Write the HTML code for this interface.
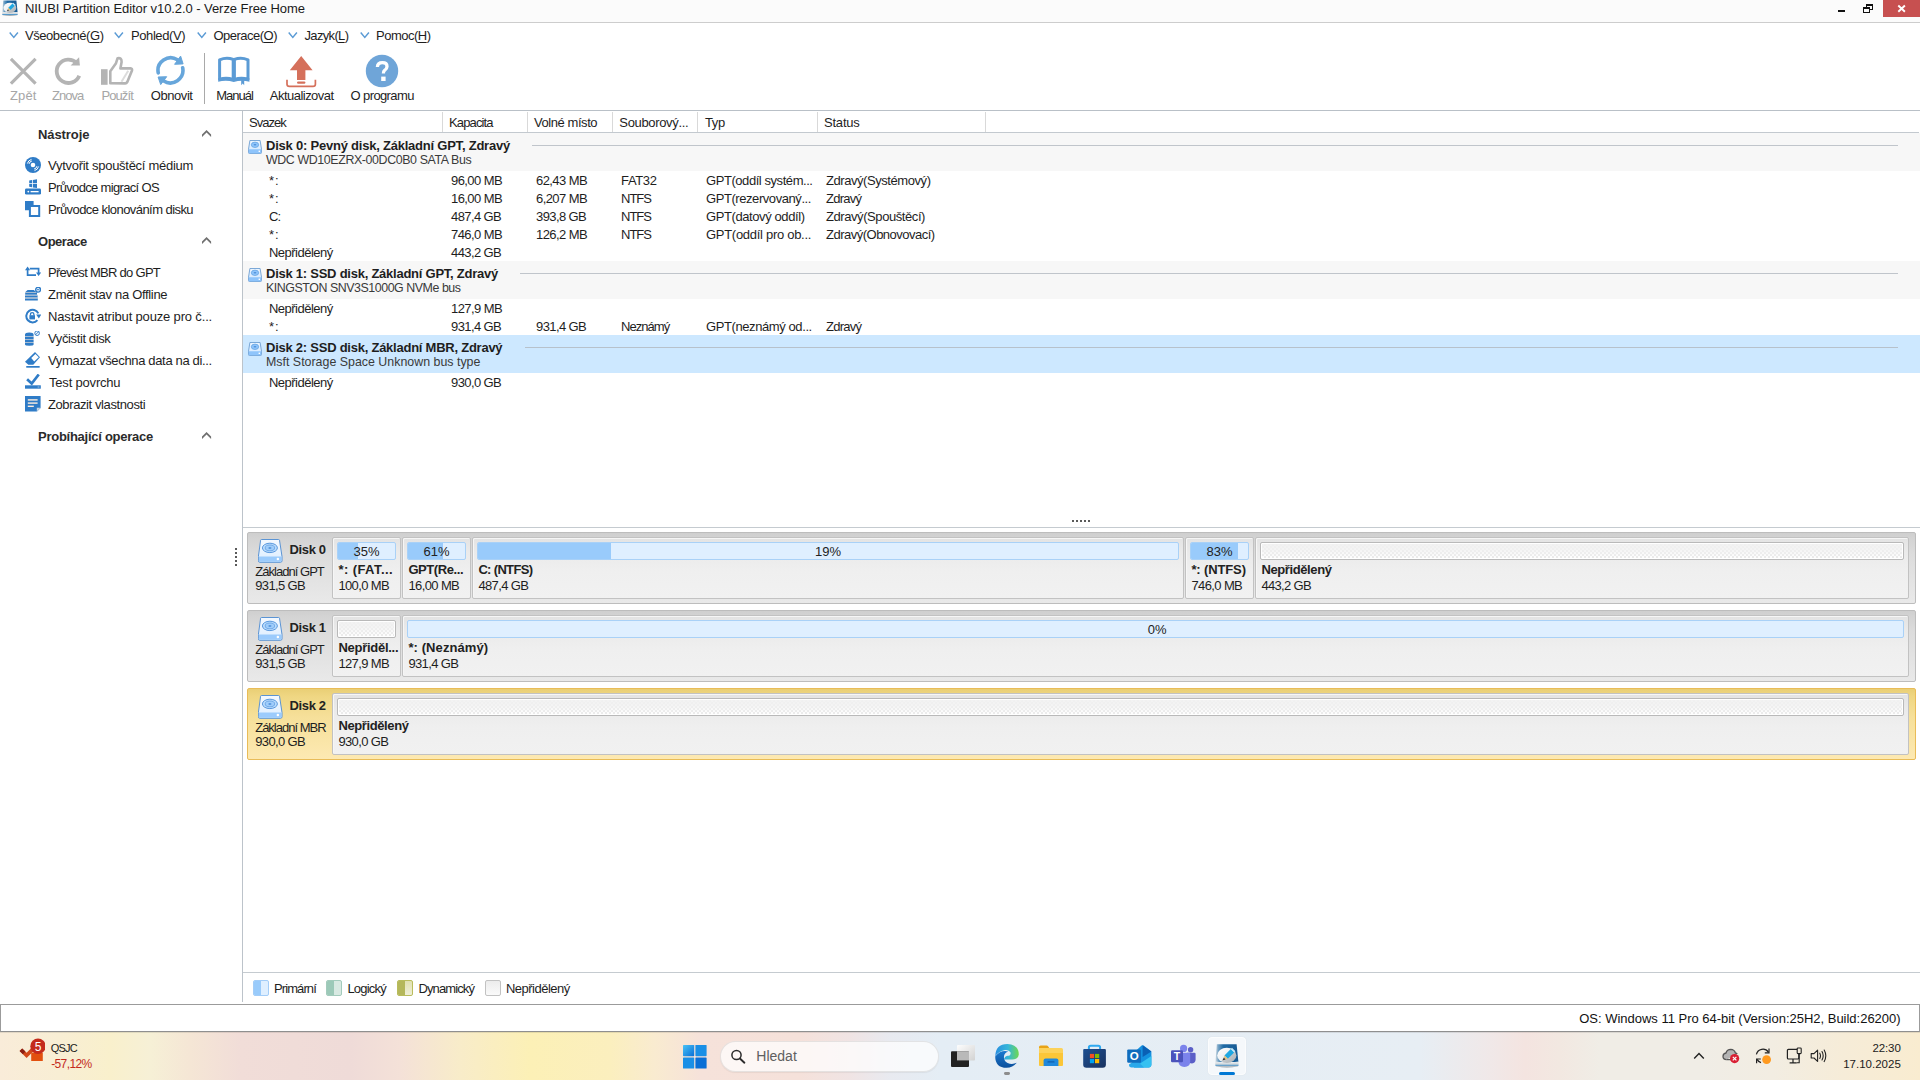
<!DOCTYPE html>
<html lang="cs">
<head>
<meta charset="utf-8">
<title>NIUBI Partition Editor v10.2.0 - Verze Free Home</title>
<style>
*{box-sizing:border-box;margin:0;padding:0}
html,body{width:1920px;height:1080px;overflow:hidden;background:#fff}
body{position:relative;font-family:"Liberation Sans","DejaVu Sans",sans-serif;font-size:13px;color:#1e1e1e}
.a{position:absolute;display:block}
.t{position:absolute;white-space:nowrap;line-height:16px;color:#1e1e1e}
.t u{text-decoration-thickness:1px;text-underline-offset:2px}

.dp{border:1px solid #bdbdbd;border-radius:2px;background:linear-gradient(#cfcfcf 0,#d3d3d3 7%,#dcdcdc 30%,#e9e9e9 100%)}
.dp.sel{border-color:#e9bc58;background:linear-gradient(#e9cf76 0,#efd682 10%,#f6e09a 40%,#fde9b2 100%)}
.pb{border:1px solid #c2c2c2;border-radius:2px;background:linear-gradient(#e3e3e3 0,#eaeaea 22%,#efefef 55%,#f1f1f1 100%);box-shadow:inset 1px 1px 0 #f6f6f6}
.bar{border:1px solid #a9d1f7;border-radius:2px;background:#dfefff;overflow:hidden}
.bar i{position:absolute;left:0;top:0;bottom:0;background:#99cbfb;display:block}
.ubar{border:1px solid #b9b9b9;border-radius:2px;background:linear-gradient(rgba(241,241,241,.95),rgba(241,241,241,.8) 40%,rgba(255,255,255,.1)),repeating-conic-gradient(#e8e8e8 0% 25%,#fff 0% 50%) 1px 1px/4px 4px;box-shadow:inset 0 0 0 1px #fff}

.lg{border:1px solid;border-radius:2px;overflow:hidden}
.lg i{position:absolute;left:0;top:0;bottom:0;width:7px;display:block}
#taskbar{left:0;top:1032px;width:1920px;height:48px;background:linear-gradient(90deg,#f9ecd9 0px,#f8eed4 60px,#f9f0cc 110px,#f6f0d6 150px,#f5e6d5 190px,#f1ddd8 240px,#efdbd8 350px,#f4e1d8 400px,#f8ecc9 460px,#fcf0b6 530px,#fbefbe 610px,#f9ebd0 655px,#f6e2da 700px,#f5e1da 800px,#f0e4e4 850px,#e8eaf0 890px,#e4edf5 940px,#e7eef4 1420px,#f0e8e8 1490px,#f4e4e0 1525px,#f2e8e1 1560px,#f0ede6 1600px,#f0ede6 1700px,#f2ede2 1772px,#f6ecd8 1843px,#f9ecd0 1920px)}
#search{left:719.5px;top:1040.5px;width:219px;height:31px;border-radius:15.5px;background:rgba(255,255,255,.72);border:1px solid rgba(0,0,0,.09);box-shadow:0 1px 1px rgba(0,0,0,.06)}

</style>
</head>
<body>
<div class="a" style="left:0px;top:0px;width:1920px;height:22px;background:#fbfbfb;"></div>
<div class="a" style="left:0px;top:22px;width:1920px;height:1px;background:#cdcdcd;"></div>
<svg class="a" style="left:2px;top:-0.5px;overflow:hidden;" width="16" height="16.5" viewBox="0 0 24 24"><defs><linearGradient id="ni1" x1="0" y1="0" x2="1" y2="0"><stop offset="0" stop-color="#d3dde4"/><stop offset=".14" stop-color="#6b9dc2"/><stop offset=".34" stop-color="#1f6aa5"/><stop offset="1" stop-color="#175a93"/></linearGradient>
<linearGradient id="ni2" x1="0" y1="0" x2="1" y2="1"><stop offset="0" stop-color="#ffffff"/><stop offset=".5" stop-color="#eceff1"/><stop offset=".62" stop-color="#bfc4c8"/><stop offset="1" stop-color="#a9afb4"/></linearGradient>
<linearGradient id="ni3" x1="0" y1="0" x2="0" y2="1"><stop offset="0" stop-color="#e9edf0"/><stop offset=".45" stop-color="#cfd6db"/><stop offset=".6" stop-color="#3c8fcb"/><stop offset=".75" stop-color="#c3cacf"/><stop offset="1" stop-color="#8c959c"/></linearGradient></defs>
<path d="M1.8 .3H21.6L23.4 18H.4z" fill="url(#ni1)"/>
<path d="M.3 17.6Q12 19.6 23.6 17.6V21.2Q23.6 22.2 22.6 22.6Q12 24.6 1.4 22.6Q.3 22.2 .3 21.2z" fill="url(#ni3)"/>
<ellipse cx="11.8" cy="11.4" rx="9.6" ry="7.6" fill="url(#ni2)"/>
<path d="M9.4 11.4L15.8 5L19.2 8.4L12.8 14.8z" fill="#1ea7e1"/><path d="M15.8 5L17 3.8L20.4 7.2L19.2 8.4z" fill="#bfe6fa"/>
<path d="M9.4 11.4L12.8 14.8L10.6 15.4L8.8 13.6z" fill="#e8c37a"/><path d="M8.8 13.6L10.6 15.4L7.4 16.6z" fill="#333"/></svg>
<div class="t" style="top:1px;font-size:13px;color:#1a1a1a;letter-spacing:-0.069px;left:25px;">NIUBI Partition Editor v10.2.0 - Verze Free Home</div>
<div class="a" style="left:1838px;top:10px;width:7px;height:2px;background:#111;"></div>
<svg class="a" style="left:1862px;top:3px;shape-rendering:crispEdges;" width="12" height="11" viewBox="0 0 12 11"><path d="M4 1H11V7H8.2V6H10V3H5V4H4z" fill="#111"/><path d="M1 4H8V10H1zM2 6V9H7V6z" fill="#111" fill-rule="evenodd"/></svg>
<div class="a" style="left:1883px;top:0px;width:37px;height:17px;background:#c75050;"></div>
<svg class="a" style="left:1897px;top:4px;" width="10" height="9" viewBox="0 0 10 9"><path d="M1.3 1.5L7.9 7.7M7.9 1.5L1.3 7.7" stroke="#fff" stroke-width="1.9" fill="none"/></svg>
<svg class="a" style="left:9px;top:31px;" width="11" height="9" viewBox="0 0 11 9"><path d="M.7 1.5L4.8 6.4L8.9 1.5" fill="none" stroke="#5b9bd5" stroke-width="1.45"/></svg>
<div class="t" style="top:28px;font-size:13px;letter-spacing:-0.442px;left:25px;">Všeobecné(<u>G</u>)</div>
<svg class="a" style="left:114px;top:31px;" width="11" height="9" viewBox="0 0 11 9"><path d="M.7 1.5L4.8 6.4L8.9 1.5" fill="none" stroke="#5b9bd5" stroke-width="1.45"/></svg>
<div class="t" style="top:28px;font-size:13px;letter-spacing:-0.416px;left:131px;">Pohled(<u>V</u>)</div>
<svg class="a" style="left:196.5px;top:31px;" width="11" height="9" viewBox="0 0 11 9"><path d="M.7 1.5L4.8 6.4L8.9 1.5" fill="none" stroke="#5b9bd5" stroke-width="1.45"/></svg>
<div class="t" style="top:28px;font-size:13px;letter-spacing:-0.519px;left:213.5px;">Operace(<u>O</u>)</div>
<svg class="a" style="left:288px;top:31px;" width="11" height="9" viewBox="0 0 11 9"><path d="M.7 1.5L4.8 6.4L8.9 1.5" fill="none" stroke="#5b9bd5" stroke-width="1.45"/></svg>
<div class="t" style="top:28px;font-size:13px;letter-spacing:-0.663px;left:304.5px;">Jazyk(<u>L</u>)</div>
<svg class="a" style="left:359.5px;top:31px;" width="11" height="9" viewBox="0 0 11 9"><path d="M.7 1.5L4.8 6.4L8.9 1.5" fill="none" stroke="#5b9bd5" stroke-width="1.45"/></svg>
<div class="t" style="top:28px;font-size:13px;letter-spacing:-0.504px;left:376px;">Pomoc(<u>H</u>)</div>
<svg class="a" style="left:9px;top:57px;" width="29" height="29" viewBox="0 0 29 29"><path d="M1.9 1.9L26.6 26.6M26.6 1.9L1.9 26.6" stroke="#b4b4b4" stroke-width="3.2" fill="none"/></svg>
<div class="t" style="top:88px;font-size:13px;color:#a6a6a6;letter-spacing:0.061px;left:10.1px;">Zpět</div>
<svg class="a" style="left:53px;top:55px;" width="30" height="32" viewBox="0 0 30 32"><path d="M23.7 8A11.7 11.7 0 1 0 26.25 20.7" fill="none" stroke="#b4b4b4" stroke-width="3.8"/><path d="M17.6 10.4L26.1 2.2L26.9 10.4z" fill="#b4b4b4"/></svg>
<div class="t" style="top:88px;font-size:13px;color:#a6a6a6;letter-spacing:-0.985px;left:52.1px;">Znova</div>
<svg class="a" style="left:100px;top:56px;" width="34" height="30" viewBox="0 0 34 30"><rect x="1" y="13.2" width="6.6" height="15.6" fill="#b4b4b4"/>
<path d="M10.3 27.2V15.2L16 7.2L17.6 2.2Q21.8 1.4 21.6 6L20.4 12.4H30.6Q32.4 12.6 32 14.6L27.2 26.2Q26.6 27.4 25.2 27.4Z" fill="#fff" stroke="#b4b4b4" stroke-width="2.6" stroke-linejoin="round"/>
<path d="M21.5 25.8L28.2 14.8" stroke="#dcdcdc" stroke-width="2"/></svg>
<div class="t" style="top:88px;font-size:13px;color:#a6a6a6;letter-spacing:-0.892px;left:101.4px;">Použít</div>
<svg class="a" style="left:154px;top:54px;" width="33" height="33" viewBox="0 0 33 33"><path d="M4.25 18.9A12.65 12.65 0 0 1 23.5 5.85" fill="none" stroke="#67a6db" stroke-width="3.6" stroke-linecap="round"/>
<path d="M28.65 13.7A12.65 12.65 0 0 1 9.4 26.85" fill="none" stroke="#67a6db" stroke-width="3.6" stroke-linecap="round"/>
<path d="M26.6 2.1L29.1 9.9L20.6 10.3z" fill="#67a6db" stroke="#67a6db" stroke-width="1" stroke-linejoin="round"/>
<path d="M6.7 30.6L4.1 23L12.7 22.7z" fill="#67a6db" stroke="#67a6db" stroke-width="1" stroke-linejoin="round"/></svg>
<div class="t" style="top:88px;font-size:13px;letter-spacing:-0.419px;left:150.7px;">Obnovit</div>
<div class="a" style="left:204px;top:53px;width:1px;height:51px;background:#a9a9a9;"></div>
<svg class="a" style="left:217px;top:55px;" width="34" height="31" viewBox="0 0 34 31"><path d="M2.6 24.2V4.8Q9.5 1.8 16.2 4.4V24.4Q9.5 22.4 2.6 24.2Z" fill="#fff" stroke="#5b9bd5" stroke-width="3" stroke-linejoin="round"/>
<path d="M31 24.2V4.8Q24.1 1.8 17.4 4.4V24.4Q24.1 22.4 31 24.2Z" fill="#fff" stroke="#5b9bd5" stroke-width="3" stroke-linejoin="round"/>
<path d="M1.2 23.2V26.8Q9 24.6 16.8 27Q24.6 24.6 32.4 26.8V23.2" fill="#5b9bd5"/>
<path d="M24.2 25V30.2L25.7 28.6L27.2 30.2V25.2z" fill="#5b9bd5"/></svg>
<div class="t" style="top:88px;font-size:13px;letter-spacing:-1.000px;left:216.2px;">Manuál</div>
<svg class="a" style="left:285px;top:55px;" width="33" height="33" viewBox="0 0 33 33"><path d="M16.2 1L27.6 15.2H20.4V25H12V15.2H4.8z" fill="#d5705b"/>
<rect x="12" y="26.4" width="8.4" height="2.4" rx="1.2" fill="#d5705b"/>
<path d="M2 24.8V29.2Q2 31.4 4.4 31.4H28Q30.4 31.4 30.4 29.2V24.8" fill="none" stroke="#d5705b" stroke-width="1.7"/></svg>
<div class="t" style="top:88px;font-size:13px;letter-spacing:-0.527px;left:269.8px;">Aktualizovat</div>
<svg class="a" style="left:365px;top:54px;" width="34" height="34" viewBox="0 0 34 34"><circle cx="17" cy="17" r="16.2" fill="#6fa5d8"/>
<path d="M12.4 13Q12.6 8.6 17.4 8.6Q22 8.6 22 12.4Q22 14.8 19.6 16.4Q18.4 17.2 18.4 19.6" fill="none" stroke="#fff" stroke-width="3.3"/>
<rect x="16.2" y="22.6" width="4.4" height="4.4" fill="#fff"/></svg>
<div class="t" style="top:88px;font-size:13px;letter-spacing:-0.619px;left:350.6px;">O programu</div>
<div class="a" style="left:0px;top:110px;width:1920px;height:1px;background:#b9c0c7;"></div>
<div class="a" style="left:242px;top:111px;width:1px;height:891px;background:#bcc3ca;"></div>
<div class="t" style="top:127px;font-size:13px;font-weight:bold;color:#2b2b2b;letter-spacing:-0.076px;left:38px;">Nástroje</div>
<svg class="a" style="left:201px;top:129px;" width="12" height="9" viewBox="0 0 12 9"><path d="M1 8.1V5.5L5.55 .9L10.1 5.5V8.1L5.55 3.5z" fill="#707070"/></svg>
<div class="t" style="top:234px;font-size:13px;font-weight:bold;color:#2b2b2b;letter-spacing:-0.474px;left:38px;">Operace</div>
<svg class="a" style="left:201px;top:236px;" width="12" height="9" viewBox="0 0 12 9"><path d="M1 8.1V5.5L5.55 .9L10.1 5.5V8.1L5.55 3.5z" fill="#707070"/></svg>
<div class="t" style="top:429px;font-size:13px;font-weight:bold;color:#2b2b2b;letter-spacing:-0.263px;left:38px;">Probíhající operace</div>
<svg class="a" style="left:201px;top:431px;" width="12" height="9" viewBox="0 0 12 9"><path d="M1 8.1V5.5L5.55 .9L10.1 5.5V8.1L5.55 3.5z" fill="#707070"/></svg>
<div class="t" style="top:158px;font-size:13px;letter-spacing:-0.274px;left:48px;">Vytvořit spouštěcí médium</div>
<div class="t" style="top:180px;font-size:13px;letter-spacing:-0.664px;left:48px;">Průvodce migrací OS</div>
<div class="t" style="top:202px;font-size:13px;letter-spacing:-0.558px;left:48px;">Průvodce klonováním disku</div>
<div class="t" style="top:265px;font-size:13px;letter-spacing:-0.717px;left:48px;">Převést MBR do GPT</div>
<div class="t" style="top:287px;font-size:13px;letter-spacing:-0.315px;left:48px;">Změnit stav na Offline</div>
<div class="t" style="top:309px;font-size:13px;letter-spacing:-0.163px;left:48px;">Nastavit atribut pouze pro č...</div>
<div class="t" style="top:331px;font-size:13px;letter-spacing:-0.385px;left:48px;">Vyčistit disk</div>
<div class="t" style="top:353px;font-size:13px;letter-spacing:-0.338px;left:48px;">Vymazat všechna data na di...</div>
<div class="t" style="top:375px;font-size:13px;letter-spacing:-0.191px;left:49px;">Test povrchu</div>
<div class="t" style="top:397px;font-size:13px;letter-spacing:-0.398px;left:48px;">Zobrazit vlastnosti</div>
<svg class="a" style="left:25px;top:157px;" width="16" height="16" viewBox="0 0 16 16"><circle cx="8" cy="8" r="8" fill="#2f7cc7"/><circle cx="8" cy="8" r="2.3" fill="#fff"/>
<path d="M2.4 6.5A5.8 5.8 0 0 1 6.5 2.4M3.94 6.91A4.2 4.2 0 0 1 6.91 3.94" fill="none" stroke="#fff" stroke-width="1"/>
<path d="M13.6 9.5A5.8 5.8 0 0 1 9.5 13.6M12.06 9.09A4.2 4.2 0 0 1 9.09 12.06" fill="none" stroke="#fff" stroke-width="1"/></svg>
<svg class="a" style="left:25px;top:179px;" width="16" height="16" viewBox="0 0 16 16"><path d="M4.2 1.6L7 1.1V4.3H4.2zM7.8 1L12 .2V4.3H7.8zM4.2 5.1H7V8.3L4.2 7.8zM7.8 5.1H12V9.1L7.8 8.4z" fill="#2f7cc7"/>
<rect x="0" y="9.6" width="16" height="6" rx="1.4" fill="#2f7cc7"/><rect x="5.6" y="12" width="8" height="1.3" fill="#fff"/><circle cx="3.3" cy="12.6" r=".9" fill="#fff"/></svg>
<svg class="a" style="left:25px;top:201px;" width="16" height="16" viewBox="0 0 16 16"><path d="M0 0H8.6V4H4V9.2H0z" fill="#2f7cc7"/><rect x="4.9" y="5" width="9.3" height="10" fill="#fff" stroke="#2f7cc7" stroke-width="2"/></svg>
<svg class="a" style="left:25px;top:264px;" width="16" height="16" viewBox="0 0 16 16"><path d="M2.6 5V11.2H11" fill="none" stroke="#2f7cc7" stroke-width="1.7"/><path d="M4.8 4.6H13.6V9" fill="none" stroke="#2f7cc7" stroke-width="1.7"/>
<path d="M0 6.2L2.6 2.6L5.2 6.2z" fill="#2f7cc7"/><path d="M11 8.4L13.6 12L16.2 8.4z" fill="#2f7cc7"/></svg>
<svg class="a" style="left:25px;top:287px;" width="16" height="16" viewBox="0 0 16 16"><path d="M2.6 3H8.8L11.2 5H.4zM.2 5.8H12V7.7H.2zM0 8.6H12.6V10.6H0zM0 11.5H12.8V13.6H0z" fill="#2f7cc7"/>
<path d="M.2 5H12V5.8H.2zM0 7.7H12.6V8.6H0zM0 10.6H12.8V11.5H0z" fill="#9ab0c6"/>
<circle cx="13.1" cy="2.7" r="2.4" fill="#fff" stroke="#2f7cc7" stroke-width="1.4"/><rect x="11.9" y="2.2" width="2.4" height="1.1" fill="#2f7cc7"/></svg>
<svg class="a" style="left:25px;top:308px;" width="16" height="16" viewBox="0 0 16 16"><path d="M13.3 5.4A6.3 6.3 0 1 0 12.4 12.2" fill="none" stroke="#2f7cc7" stroke-width="2"/><path d="M11.2 6.4H16.4L13.8 10.4z" fill="#2f7cc7"/>
<rect x="4.4" y="7.2" width="5.6" height="4.2" fill="#2f7cc7"/><path d="M5.5 7.6V6.2Q5.5 4.6 7.2 4.6Q8.9 4.6 8.9 6.2V7.6" fill="none" stroke="#2f7cc7" stroke-width="1.3"/></svg>
<svg class="a" style="left:25px;top:331px;" width="16" height="16" viewBox="0 0 16 16"><path d="M0 3.6Q0 1.4 4.3 1.4Q8.6 1.4 8.6 3.6V5H0zM0 5.8H8.6V8H0zM0 8.8H8.6V11H0zM0 11.8H8.6V13.6Q8.6 14.8 4.3 14.8Q0 14.8 0 13.6z" fill="#2f7cc7"/>
<path d="M0 5H8.6V5.8H0zM0 8H8.6V8.8H0zM0 11H8.6V11.8H0z" fill="#9ab0c6"/>
<circle cx="12.1" cy="2.2" r="2.3" fill="#fff" stroke="#2f7cc7" stroke-width="1"/><path d="M10.5 3.8L13.7 .6" stroke="#2f7cc7" stroke-width="1"/></svg>
<svg class="a" style="left:25px;top:352px;" width="16" height="16" viewBox="0 0 16 16"><path d="M10 0L15 5.25L8.3 12.75H3.3L0 9.8z" fill="#2f7cc7"/><path d="M10.4 1.9L13.75 5.25L9.2 9.4L6.25 6.1z" fill="#fff"/><rect x="1.25" y="14" width="13.4" height="1.7" fill="#2f7cc7"/></svg>
<svg class="a" style="left:25px;top:374px;" width="16" height="16" viewBox="0 0 16 16"><path d="M2.1 5.3L6.7 9.5L13.75 .5" fill="none" stroke="#2f7cc7" stroke-width="2.7"/><rect x="0" y="11.3" width="15.8" height="3.4" fill="#2f7cc7"/><rect x="12.6" y="12.6" width="1.8" height=".8" fill="#b8d4ee"/></svg>
<svg class="a" style="left:25px;top:396px;" width="16" height="16" viewBox="0 0 16 16"><path d="M0 0H15.6V12L12 15.6H0z" fill="#2f7cc7"/><path d="M11.8 15.6V11.8H15.6z" fill="#c9d6e2"/>
<rect x="2.8" y="3.2" width="9.8" height="1.4" fill="#fdeee0"/><rect x="2.8" y="6.4" width="9.8" height="1.4" fill="#fdeee0"/><rect x="2.8" y="9.6" width="6" height="1.4" fill="#fdeee0"/></svg>
<div class="t" style="top:115px;font-size:13px;letter-spacing:-1.000px;left:249px;">Svazek</div>
<div class="t" style="top:115px;font-size:13px;letter-spacing:-0.856px;left:449px;">Kapacita</div>
<div class="t" style="top:115px;font-size:13px;letter-spacing:-0.434px;left:534px;">Volné místo</div>
<div class="t" style="top:115px;font-size:13px;letter-spacing:-0.336px;left:619.3px;">Souborový...</div>
<div class="t" style="top:115px;font-size:13px;letter-spacing:-0.384px;left:705px;">Typ</div>
<div class="t" style="top:115px;font-size:13px;letter-spacing:-0.212px;left:824px;">Status</div>
<div class="a" style="left:442px;top:112px;width:1px;height:20px;background:#d9d9d9;"></div>
<div class="a" style="left:527px;top:112px;width:1px;height:20px;background:#d9d9d9;"></div>
<div class="a" style="left:612px;top:112px;width:1px;height:20px;background:#d9d9d9;"></div>
<div class="a" style="left:697px;top:112px;width:1px;height:20px;background:#d9d9d9;"></div>
<div class="a" style="left:817px;top:112px;width:1px;height:20px;background:#d9d9d9;"></div>
<div class="a" style="left:985px;top:112px;width:1px;height:20px;background:#d9d9d9;"></div>
<div class="a" style="left:243px;top:132px;width:1676px;height:1px;background:#c3c9cf;"></div>
<div class="a" style="left:243px;top:133px;width:1677px;height:38px;background:#f7f7f7;"></div>
<svg class="a" style="left:248px;top:140px;" width="14" height="14" viewBox="0 0 14 14"><defs><linearGradient id="dsg" x1="0" y1="0" x2="0" y2="1"><stop offset="0" stop-color="#eef6ff"/><stop offset="1" stop-color="#cfe6ff"/></linearGradient></defs><path d="M1.9 .5H12.1L13.5 9.2V12.6Q13.5 13.5 12.6 13.5H1.4Q.5 13.5 .5 12.6V9.2Z" fill="url(#dsg)" stroke="#6e9fd2" stroke-width=".9"/>
<path d="M.8 9.3H13.2V12.5Q13.2 13.2 12.5 13.2H1.5Q.8 13.2 .8 12.5Z" fill="#8ec4fb"/>
<ellipse cx="7" cy="4.8" rx="3.7" ry="2.7" fill="#8ec4fb" stroke="#5f9fe0" stroke-width=".7"/><ellipse cx="7" cy="4.8" rx="1.4" ry=".7" fill="#4f90d8"/>
<rect x="10.6" y="10.6" width="1.4" height="1.4" fill="#fff"/></svg>
<div class="t" style="top:138px;font-size:13px;font-weight:bold;letter-spacing:-0.223px;left:266px;">Disk 0: Pevný disk, Základní GPT, Zdravý</div>
<div class="t" style="top:152px;font-size:12.4px;color:#3a3a3a;letter-spacing:-0.387px;left:266px;">WDC WD10EZRX-00DC0B0 SATA Bus</div>
<div class="a" style="left:532px;top:145px;width:1366px;height:1px;background:#c0c5cb;"></div>
<div class="t" style="top:173px;font-size:13px;letter-spacing:1.000px;left:269px;">*:</div>
<div class="t" style="top:173px;font-size:13px;letter-spacing:-0.579px;left:451px;">96,00 MB</div>
<div class="t" style="top:173px;font-size:13px;letter-spacing:-0.579px;left:536px;">62,43 MB</div>
<div class="t" style="top:173px;font-size:13px;letter-spacing:-0.336px;left:621px;">FAT32</div>
<div class="t" style="top:173px;font-size:13px;letter-spacing:-0.438px;left:706px;">GPT(oddíl systém...</div>
<div class="t" style="top:173px;font-size:13px;letter-spacing:-0.436px;left:826px;">Zdravý(Systémový)</div>
<div class="t" style="top:191px;font-size:13px;letter-spacing:1.000px;left:269px;">*:</div>
<div class="t" style="top:191px;font-size:13px;letter-spacing:-0.579px;left:451px;">16,00 MB</div>
<div class="t" style="top:191px;font-size:13px;letter-spacing:-0.579px;left:536px;">6,207 MB</div>
<div class="t" style="top:191px;font-size:13px;letter-spacing:-1.000px;left:621px;">NTFS</div>
<div class="t" style="top:191px;font-size:13px;letter-spacing:-0.430px;left:706px;">GPT(rezervovaný...</div>
<div class="t" style="top:191px;font-size:13px;letter-spacing:-0.747px;left:826px;">Zdravý</div>
<div class="t" style="top:209px;font-size:13px;letter-spacing:-1.000px;left:269px;">C:</div>
<div class="t" style="top:209px;font-size:13px;letter-spacing:-0.591px;left:451px;">487,4 GB</div>
<div class="t" style="top:209px;font-size:13px;letter-spacing:-0.591px;left:536px;">393,8 GB</div>
<div class="t" style="top:209px;font-size:13px;letter-spacing:-1.000px;left:621px;">NTFS</div>
<div class="t" style="top:209px;font-size:13px;letter-spacing:-0.406px;left:706px;">GPT(datový oddíl)</div>
<div class="t" style="top:209px;font-size:13px;letter-spacing:-0.425px;left:826px;">Zdravý(Spouštěcí)</div>
<div class="t" style="top:227px;font-size:13px;letter-spacing:1.000px;left:269px;">*:</div>
<div class="t" style="top:227px;font-size:13px;letter-spacing:-0.579px;left:451px;">746,0 MB</div>
<div class="t" style="top:227px;font-size:13px;letter-spacing:-0.579px;left:536px;">126,2 MB</div>
<div class="t" style="top:227px;font-size:13px;letter-spacing:-1.000px;left:621px;">NTFS</div>
<div class="t" style="top:227px;font-size:13px;letter-spacing:-0.287px;left:706px;">GPT(oddíl pro ob...</div>
<div class="t" style="top:227px;font-size:13px;letter-spacing:-0.504px;left:826px;">Zdravý(Obnovovací)</div>
<div class="t" style="top:245px;font-size:13px;letter-spacing:-0.518px;left:269px;">Nepřidělený</div>
<div class="t" style="top:245px;font-size:13px;letter-spacing:-0.591px;left:451px;">443,2 GB</div>
<div class="a" style="left:243px;top:261px;width:1677px;height:38px;background:#f7f7f7;"></div>
<svg class="a" style="left:248px;top:268px;" width="14" height="14" viewBox="0 0 14 14"><path d="M1.9 .5H12.1L13.5 9.2V12.6Q13.5 13.5 12.6 13.5H1.4Q.5 13.5 .5 12.6V9.2Z" fill="url(#dsg)" stroke="#6e9fd2" stroke-width=".9"/>
<path d="M.8 9.3H13.2V12.5Q13.2 13.2 12.5 13.2H1.5Q.8 13.2 .8 12.5Z" fill="#8ec4fb"/>
<ellipse cx="7" cy="4.8" rx="3.7" ry="2.7" fill="#8ec4fb" stroke="#5f9fe0" stroke-width=".7"/><ellipse cx="7" cy="4.8" rx="1.4" ry=".7" fill="#4f90d8"/>
<rect x="10.6" y="10.6" width="1.4" height="1.4" fill="#fff"/></svg>
<div class="t" style="top:266px;font-size:13px;font-weight:bold;letter-spacing:-0.246px;left:266px;">Disk 1: SSD disk, Základní GPT, Zdravý</div>
<div class="t" style="top:280px;font-size:12.4px;color:#3a3a3a;letter-spacing:-0.447px;left:266px;">KINGSTON SNV3S1000G NVMe bus</div>
<div class="a" style="left:520px;top:273px;width:1378px;height:1px;background:#c0c5cb;"></div>
<div class="t" style="top:301px;font-size:13px;letter-spacing:-0.518px;left:269px;">Nepřidělený</div>
<div class="t" style="top:301px;font-size:13px;letter-spacing:-0.579px;left:451px;">127,9 MB</div>
<div class="t" style="top:319px;font-size:13px;letter-spacing:1.000px;left:269px;">*:</div>
<div class="t" style="top:319px;font-size:13px;letter-spacing:-0.591px;left:451px;">931,4 GB</div>
<div class="t" style="top:319px;font-size:13px;letter-spacing:-0.591px;left:536px;">931,4 GB</div>
<div class="t" style="top:319px;font-size:13px;letter-spacing:-0.954px;left:621px;">Neznámý</div>
<div class="t" style="top:319px;font-size:13px;letter-spacing:-0.407px;left:706px;">GPT(neznámý od...</div>
<div class="t" style="top:319px;font-size:13px;letter-spacing:-0.747px;left:826px;">Zdravý</div>
<div class="a" style="left:243px;top:335px;width:1677px;height:38px;background:#cde8ff;"></div>
<svg class="a" style="left:248px;top:342px;" width="14" height="14" viewBox="0 0 14 14"><path d="M1.9 .5H12.1L13.5 9.2V12.6Q13.5 13.5 12.6 13.5H1.4Q.5 13.5 .5 12.6V9.2Z" fill="url(#dsg)" stroke="#6e9fd2" stroke-width=".9"/>
<path d="M.8 9.3H13.2V12.5Q13.2 13.2 12.5 13.2H1.5Q.8 13.2 .8 12.5Z" fill="#8ec4fb"/>
<ellipse cx="7" cy="4.8" rx="3.7" ry="2.7" fill="#8ec4fb" stroke="#5f9fe0" stroke-width=".7"/><ellipse cx="7" cy="4.8" rx="1.4" ry=".7" fill="#4f90d8"/>
<rect x="10.6" y="10.6" width="1.4" height="1.4" fill="#fff"/></svg>
<div class="t" style="top:340px;font-size:13px;font-weight:bold;letter-spacing:-0.244px;left:266px;">Disk 2: SSD disk, Základní MBR, Zdravý</div>
<div class="t" style="top:354px;font-size:12.4px;color:#3a3a3a;letter-spacing:0.006px;left:266px;">Msft Storage Space Unknown bus type</div>
<div class="a" style="left:525px;top:347px;width:1373px;height:1px;background:#b7c1cb;"></div>
<div class="t" style="top:375px;font-size:13px;letter-spacing:-0.518px;left:269px;">Nepřidělený</div>
<div class="t" style="top:375px;font-size:13px;letter-spacing:-0.591px;left:451px;">930,0 GB</div>
<div class="a" style="left:1072px;top:520px;width:2px;height:2px;background:#5a5a5a;"></div>
<div class="a" style="left:1076px;top:520px;width:2px;height:2px;background:#5a5a5a;"></div>
<div class="a" style="left:1080px;top:520px;width:2px;height:2px;background:#5a5a5a;"></div>
<div class="a" style="left:1084px;top:520px;width:2px;height:2px;background:#5a5a5a;"></div>
<div class="a" style="left:1088px;top:520px;width:2px;height:2px;background:#5a5a5a;"></div>
<div class="a" style="left:243px;top:527px;width:1677px;height:1px;background:#c5cbd0;"></div>
<div class="a" style="left:235px;top:548px;width:2px;height:2px;background:#5a5a5a;"></div>
<div class="a" style="left:235px;top:552px;width:2px;height:2px;background:#5a5a5a;"></div>
<div class="a" style="left:235px;top:556px;width:2px;height:2px;background:#5a5a5a;"></div>
<div class="a" style="left:235px;top:560px;width:2px;height:2px;background:#5a5a5a;"></div>
<div class="a" style="left:235px;top:564px;width:2px;height:2px;background:#5a5a5a;"></div>
<div class="a dp" style="left:247px;top:532px;width:1669px;height:72px"></div>
<svg class="a" style="left:258px;top:539px;" width="25" height="24" viewBox="0 0 25 24"><defs><linearGradient id="dbg" x1="0" y1="0" x2="0" y2="1"><stop offset="0" stop-color="#f4f9ff"/><stop offset="1" stop-color="#dcedff"/></linearGradient></defs><path d="M3.4 .5H20.6Q21.3 .5 21.5 1.2L24 17.4V21.8Q24 23.3 22.5 23.3H1.9Q.4 23.3 .4 21.8V17.4L2.6 1.2Q2.8 .5 3.4 .5Z" fill="url(#dbg)" stroke="#5b94d4" stroke-width="1"/>
<path d="M.9 17.5H23.5V21.7Q23.5 22.8 22.4 22.8H2Q.9 22.8 .9 21.7Z" fill="#9bcbfc"/>
<ellipse cx="11.9" cy="8.9" rx="7.5" ry="4.7" fill="#b8dbfd" stroke="#5a98dd" stroke-width="1"/>
<ellipse cx="11.9" cy="8.9" rx="4.7" ry="2.9" fill="#9fcdfb" stroke="#5a98dd" stroke-width=".7"/>
<ellipse cx="11.9" cy="8.9" rx="1.6" ry=".75" fill="#3f84d2"/>
<circle cx="19.9" cy="20.1" r="1.25" fill="#fff"/></svg>
<div class="t" style="top:542px;font-size:13px;font-weight:bold;color:#222;letter-spacing:-0.383px;left:289.6px;">Disk 0</div>
<div class="t" style="top:564px;font-size:13px;letter-spacing:-0.964px;left:255.2px;">Základní GPT</div>
<div class="t" style="top:578px;font-size:13px;letter-spacing:-0.620px;left:255.2px;">931,5 GB</div>
<div class="a pb" style="left:332px;top:537px;width:69px;height:62px"></div>
<div class="a bar" style="left:337px;top:542px;width:59px;height:18px"><i style="width:20px"></i></div>
<div class="t" style="top:544px;font-size:13px;color:#222;left:353.5px;">35%</div>
<div class="t" style="top:562px;font-size:13px;font-weight:bold;color:#222;letter-spacing:0.432px;left:338.4px;">*: (FAT...</div>
<div class="t" style="top:578px;font-size:13px;letter-spacing:-0.637px;left:338.4px;">100,0 MB</div>
<div class="a pb" style="left:402px;top:537px;width:69px;height:62px"></div>
<div class="a bar" style="left:407px;top:542px;width:59px;height:18px"><i style="width:35px"></i></div>
<div class="t" style="top:544px;font-size:13px;color:#222;left:423.5px;">61%</div>
<div class="t" style="top:562px;font-size:13px;font-weight:bold;color:#222;letter-spacing:-0.414px;left:408.4px;">GPT(Re...</div>
<div class="t" style="top:578px;font-size:13px;letter-spacing:-0.608px;left:408.4px;">16,00 MB</div>
<div class="a pb" style="left:472px;top:537px;width:712px;height:62px"></div>
<div class="a bar" style="left:477px;top:542px;width:702px;height:18px"><i style="width:133px"></i></div>
<div class="t" style="top:544px;font-size:13px;color:#222;left:815.0px;">19%</div>
<div class="t" style="top:562px;font-size:13px;font-weight:bold;color:#222;letter-spacing:-0.667px;left:478.4px;">C: (NTFS)</div>
<div class="t" style="top:578px;font-size:13px;letter-spacing:-0.620px;left:478.4px;">487,4 GB</div>
<div class="a pb" style="left:1185px;top:537px;width:69px;height:62px"></div>
<div class="a bar" style="left:1190px;top:542px;width:59px;height:18px"><i style="width:47px"></i></div>
<div class="t" style="top:544px;font-size:13px;color:#222;left:1206.5px;">83%</div>
<div class="t" style="top:562px;font-size:13px;font-weight:bold;color:#222;letter-spacing:-0.126px;left:1191.4px;">*: (NTFS)</div>
<div class="t" style="top:578px;font-size:13px;letter-spacing:-0.608px;left:1191.4px;">746,0 MB</div>
<div class="a pb" style="left:1255px;top:537px;width:654px;height:62px"></div>
<div class="a ubar" style="left:1260px;top:542px;width:644px;height:18px"></div>
<div class="t" style="top:562px;font-size:13px;font-weight:bold;color:#222;letter-spacing:-0.382px;left:1261.4px;">Nepřidělený</div>
<div class="t" style="top:578px;font-size:13px;letter-spacing:-0.677px;left:1261.4px;">443,2 GB</div>
<div class="a dp" style="left:247px;top:610px;width:1669px;height:72px"></div>
<svg class="a" style="left:258px;top:617px;" width="25" height="24" viewBox="0 0 25 24"><path d="M3.4 .5H20.6Q21.3 .5 21.5 1.2L24 17.4V21.8Q24 23.3 22.5 23.3H1.9Q.4 23.3 .4 21.8V17.4L2.6 1.2Q2.8 .5 3.4 .5Z" fill="url(#dbg)" stroke="#5b94d4" stroke-width="1"/>
<path d="M.9 17.5H23.5V21.7Q23.5 22.8 22.4 22.8H2Q.9 22.8 .9 21.7Z" fill="#9bcbfc"/>
<ellipse cx="11.9" cy="8.9" rx="7.5" ry="4.7" fill="#b8dbfd" stroke="#5a98dd" stroke-width="1"/>
<ellipse cx="11.9" cy="8.9" rx="4.7" ry="2.9" fill="#9fcdfb" stroke="#5a98dd" stroke-width=".7"/>
<ellipse cx="11.9" cy="8.9" rx="1.6" ry=".75" fill="#3f84d2"/>
<circle cx="19.9" cy="20.1" r="1.25" fill="#fff"/></svg>
<div class="t" style="top:620px;font-size:13px;font-weight:bold;color:#222;letter-spacing:-0.383px;left:289.6px;">Disk 1</div>
<div class="t" style="top:642px;font-size:13px;letter-spacing:-0.964px;left:255.2px;">Základní GPT</div>
<div class="t" style="top:656px;font-size:13px;letter-spacing:-0.620px;left:255.2px;">931,5 GB</div>
<div class="a pb" style="left:332px;top:615px;width:69px;height:62px"></div>
<div class="a ubar" style="left:337px;top:620px;width:59px;height:18px"></div>
<div class="t" style="top:640px;font-size:13px;font-weight:bold;color:#222;letter-spacing:-0.266px;left:338.4px;">Nepřiděl...</div>
<div class="t" style="top:656px;font-size:13px;letter-spacing:-0.637px;left:338.4px;">127,9 MB</div>
<div class="a pb" style="left:402px;top:615px;width:1507px;height:62px"></div>
<div class="a bar" style="left:407px;top:620px;width:1497px;height:18px"><i style="width:0px"></i></div>
<div class="t" style="top:622px;font-size:13px;color:#222;left:1147.8px;">0%</div>
<div class="t" style="top:640px;font-size:13px;font-weight:bold;color:#222;letter-spacing:0.095px;left:408.4px;">*: (Neznámý)</div>
<div class="t" style="top:656px;font-size:13px;letter-spacing:-0.620px;left:408.4px;">931,4 GB</div>
<div class="a dp sel" style="left:247px;top:688px;width:1669px;height:72px"></div>
<svg class="a" style="left:258px;top:695px;" width="25" height="24" viewBox="0 0 25 24"><path d="M3.4 .5H20.6Q21.3 .5 21.5 1.2L24 17.4V21.8Q24 23.3 22.5 23.3H1.9Q.4 23.3 .4 21.8V17.4L2.6 1.2Q2.8 .5 3.4 .5Z" fill="url(#dbg)" stroke="#5b94d4" stroke-width="1"/>
<path d="M.9 17.5H23.5V21.7Q23.5 22.8 22.4 22.8H2Q.9 22.8 .9 21.7Z" fill="#9bcbfc"/>
<ellipse cx="11.9" cy="8.9" rx="7.5" ry="4.7" fill="#b8dbfd" stroke="#5a98dd" stroke-width="1"/>
<ellipse cx="11.9" cy="8.9" rx="4.7" ry="2.9" fill="#9fcdfb" stroke="#5a98dd" stroke-width=".7"/>
<ellipse cx="11.9" cy="8.9" rx="1.6" ry=".75" fill="#3f84d2"/>
<circle cx="19.9" cy="20.1" r="1.25" fill="#fff"/></svg>
<div class="t" style="top:698px;font-size:13px;font-weight:bold;color:#222;letter-spacing:-0.383px;left:289.6px;">Disk 2</div>
<div class="t" style="top:720px;font-size:13px;letter-spacing:-1.000px;left:255.2px;">Základní MBR</div>
<div class="t" style="top:734px;font-size:13px;letter-spacing:-0.620px;left:255.2px;">930,0 GB</div>
<div class="a pb" style="left:332px;top:693px;width:1577px;height:62px"></div>
<div class="a ubar" style="left:337px;top:698px;width:1567px;height:18px"></div>
<div class="t" style="top:718px;font-size:13px;font-weight:bold;color:#222;letter-spacing:-0.382px;left:338.4px;">Nepřidělený</div>
<div class="t" style="top:734px;font-size:13px;letter-spacing:-0.620px;left:338.4px;">930,0 GB</div>
<div class="a" style="left:243px;top:972px;width:1677px;height:1px;background:#c5cbd0;"></div>
<div class="a lg" style="left:253px;top:980px;width:16px;height:16px;border-color:#a3cdf8;background:#dfefff"><i style="background:#99cbfb"></i></div>
<div class="t" style="top:981px;font-size:13px;letter-spacing:-0.904px;left:274px;">Primární</div>
<div class="a lg" style="left:326px;top:980px;width:16px;height:16px;border-color:#a3cbbc;background:#d8e9e2"><i style="background:#9cc9b8"></i></div>
<div class="t" style="top:981px;font-size:13px;letter-spacing:-0.780px;left:347.4px;">Logický</div>
<div class="a lg" style="left:397px;top:980px;width:16px;height:16px;border-color:#b9bc5c;background:linear-gradient(#e0e0b0,#efefd6)"><i style="background:#b4b75a"></i></div>
<div class="t" style="top:981px;font-size:13px;letter-spacing:-0.872px;left:418.4px;">Dynamický</div>
<div class="a lg" style="left:485px;top:980px;width:16px;height:16px;border-color:#c2c2c2;background:linear-gradient(#ececec,#fafafa)"></div>
<div class="t" style="top:981px;font-size:13px;letter-spacing:-0.517px;left:506px;">Nepřidělený</div>
<div class="a" style="left:0;top:1004px;width:1920px;height:28px;border:1px solid #9b9b9b;border-bottom-color:#8f8f8f;background:#fff"></div>
<div class="t" style="top:1011px;font-size:13px;color:#111;letter-spacing:-0.012px;left:1579.2px;">OS: Windows 11 Pro 64-bit (Version:25H2, Build:26200)</div>
<div class="a" id="taskbar"></div>
<div class="a" style="left:0px;top:1032px;width:1920px;height:1px;background:rgba(0,0,0,.09);"></div>
<svg class="a" style="left:19px;top:1038px;" width="26" height="26" viewBox="0 0 26 26"><path d="M.6 13L3.2 10.4L7.6 14.8L12.6 9.8L15.2 12.4L7.6 20z" fill="#d1481a"/><path d="M.6 13L3.2 10.4L6.4 13.6L3.8 16.2z" fill="#8a1f14"/>
<path d="M12.2 14.6H23.8V23H12.2z" fill="#e2500e"/>
<circle cx="19" cy="8.2" r="7.7" fill="#c42b1c"/></svg>
<div class="t" style="top:1039px;font-size:12px;color:#fff;left:34.7px;">5</div>
<div class="t" style="top:1040px;font-size:11px;color:#1b1b1b;letter-spacing:-0.848px;left:50.8px;">QSJC</div>
<div class="t" style="top:1056px;font-size:12px;color:#c42b1c;letter-spacing:-0.617px;left:51.2px;">-57,12%</div>
<svg class="a" style="left:683px;top:1045px;" width="24" height="24" viewBox="0 0 24 24"><defs><linearGradient id="wg" x1="0" y1="0" x2="1" y2="1"><stop offset="0" stop-color="#49c3f7"/><stop offset="1" stop-color="#0a6fd6"/></linearGradient></defs>
<rect x="0" y="0" width="11.2" height="11.2" rx=".6" fill="url(#wg)"/><rect x="12.4" y="0" width="11.2" height="11.2" rx=".6" fill="#1a8fe6"/>
<rect x="0" y="12.4" width="11.2" height="11.2" rx=".6" fill="#1a8fe6"/><rect x="12.4" y="12.4" width="11.2" height="11.2" rx=".6" fill="#0a6fd6"/></svg>
<div class="a" id="search"></div>
<svg class="a" style="left:730px;top:1047px;" width="18" height="18" viewBox="0 0 18 18"><circle cx="6.5" cy="8" r="4.6" fill="none" stroke="#2b2b2b" stroke-width="1.5"/><path d="M9.9 11.5L14.4 15.7" stroke="#2b2b2b" stroke-width="1.9" stroke-linecap="round"/></svg>
<div class="t" style="top:1046px;font-size:14px;line-height:20px;color:#606060;letter-spacing:0.006px;left:756.3px;">Hledat</div>
<svg class="a" style="left:950px;top:1044px;" width="26" height="24" viewBox="0 0 26 24"><defs><linearGradient id="tv1" x1="0" y1="0" x2="1" y2="1"><stop offset="0" stop-color="#fdfdfd"/><stop offset="1" stop-color="#d2d2d2"/></linearGradient></defs>
<rect x="7" y="1" width="18" height="15.4" rx="1" fill="url(#tv1)"/><rect x="1" y="7.2" width="18" height="15.8" rx="1" fill="#222"/><path d="M7 7.2H19V16.4H7z" fill="#b9b9b9"/></svg>
<svg class="a" style="left:994px;top:1043px;" width="26" height="26" viewBox="0 0 26 26"><defs><linearGradient id="eg1" x1="0" y1="0" x2="1" y2="0"><stop offset="0" stop-color="#2a8fe0"/><stop offset=".55" stop-color="#35b7d9"/><stop offset="1" stop-color="#6fd84e"/></linearGradient>
<linearGradient id="eg2" x1="0" y1="0" x2="0" y2="1"><stop offset="0" stop-color="#1b7ad0"/><stop offset="1" stop-color="#0c4f9c"/></linearGradient></defs>
<path d="M1.2 13.4Q1.6 1 13.4 1Q24.8 1.6 24.8 11.4Q24.4 16.4 18.4 16.6H10Q10.4 13.6 13.6 12.8Q17 12.8 16.6 9.6Q15 6.4 11 7Q4 8.6 1.2 13.4Z" fill="url(#eg1)"/>
<path d="M1.2 13.4Q1.2 24.6 12.6 24.8Q18.6 24.8 22.8 19.8Q18 22 13.6 20Q9.2 17.6 10 13Q10.6 9.6 14.2 8.4Q7 6.4 1.2 13.4Z" fill="url(#eg2)"/></svg>
<div class="a" style="left:1004px;top:1072.2px;width:6px;height:2.8px;background:#8d8d8d;border-radius:1.4px;"></div>
<svg class="a" style="left:1038px;top:1044px;" width="26" height="23" viewBox="0 0 26 23"><path d="M1 3.2Q1 1.6 2.6 1.6H8.6Q9.6 1.6 10.2 2.4L11.6 4.4H1z" fill="#e8a317"/><path d="M1 4H23.4Q25 4 25 5.6V20.4Q25 22 23.4 22H2.6Q1 22 1 20.4z" fill="#fcd25a"/>
<path d="M1 9H25V20.4Q25 22 23.4 22H2.6Q1 22 1 20.4z" fill="#fbc638"/><path d="M5.6 22V16.6Q5.6 14.6 7.6 14.6H18.4Q20.4 14.6 20.4 16.6V22z" fill="#1f88dc"/><rect x="9.4" y="17.2" width="7.2" height="1.4" rx=".7" fill="#0f5fae"/></svg>
<svg class="a" style="left:1082px;top:1044px;" width="26" height="26" viewBox="0 0 26 26"><defs><linearGradient id="st1" x1="0" y1="0" x2="1" y2="1"><stop offset="0" stop-color="#1d4f91"/><stop offset="1" stop-color="#19325f"/></linearGradient></defs>
<path d="M6.9 7V3.6Q6.9 1.8 8.7 1.8H16.3Q18.1 1.8 18.1 3.6V7" fill="none" stroke="#2fa9f0" stroke-width="2"/>
<path d="M1.2 5.9Q1.2 4.9 2.2 4.9H22.9Q23.9 4.9 23.9 5.9V20.6Q23.9 23.8 20.7 23.8H4.4Q1.2 23.8 1.2 20.6z" fill="url(#st1)"/>
<rect x="7.9" y="9.9" width="4.2" height="4.2" fill="#f25022"/><rect x="13" y="9.9" width="4.2" height="4.2" fill="#7fba00"/><rect x="7.9" y="15" width="4.2" height="4.2" fill="#00a4ef"/><rect x="13" y="15" width="4.2" height="4.2" fill="#ffb900"/></svg>
<svg class="a" style="left:1126px;top:1044px;" width="27" height="26" viewBox="0 0 27 26"><path d="M8 8.6L15.6 1.6Q16.6 1 17.6 1.6L25.4 7.4V20.6Q25.4 23.4 22.6 23.4H8z" fill="#1490df"/><path d="M16.6 1.2L25.4 7.4L16.6 13z" fill="#0a5fb4"/>
<path d="M8 23.4L25.4 12V20.6Q25.4 23.4 22.6 23.4z" fill="#35c1f1"/><path d="M3 20.4L10 15.6L18 23.4H5.6Q3 23.4 3 21z" fill="#28a8ea"/>
<rect x="1.2" y="5.4" width="13.8" height="13.4" rx="1.2" fill="#0f6cbd"/></svg>
<div class="t" style="top:1048px;font-size:11.5px;font-weight:bold;color:#fff;left:1129.7px;">O</div>
<svg class="a" style="left:1170px;top:1043px;" width="26" height="26" viewBox="0 0 26 26"><circle cx="20.6" cy="6.8" r="2.7" fill="#5b5fc7"/><circle cx="13.6" cy="5.4" r="3.6" fill="#7b83eb"/>
<path d="M17 9.8H24.4Q25.6 9.8 25.6 11V16.6Q25.6 20.2 22 20.6Q18.8 20.6 17 18z" fill="#5b5fc7"/>
<path d="M8.4 9.8H19Q20.2 9.8 20.2 11V18.4Q20.2 23.6 14.4 24Q8.8 23.6 8.4 18.4z" fill="#7b83eb"/>
<rect x="1" y="7.2" width="12" height="12" rx="1.2" fill="#4b53bc"/></svg>
<div class="t" style="top:1048px;font-size:10.5px;font-weight:bold;color:#fff;left:1173.8px;">T</div>
<div class="a" style="left:1208px;top:1037px;width:38px;height:38px;border-radius:4px;background:rgba(255,255,255,.6);border:1px solid rgba(255,255,255,.55);box-shadow:0 0 1px rgba(0,0,0,.12)"></div>
<svg class="a" style="left:1215px;top:1044px;" width="24" height="24" viewBox="0 0 24 24">
<path d="M1.8 .3H21.6L23.4 18H.4z" fill="url(#ni1)"/>
<path d="M.3 17.6Q12 19.6 23.6 17.6V21.2Q23.6 22.2 22.6 22.6Q12 24.6 1.4 22.6Q.3 22.2 .3 21.2z" fill="url(#ni3)"/>
<ellipse cx="11.8" cy="11.4" rx="9.6" ry="7.6" fill="url(#ni2)"/>
<path d="M9.4 11.4L15.8 5L19.2 8.4L12.8 14.8z" fill="#1ea7e1"/><path d="M15.8 5L17 3.8L20.4 7.2L19.2 8.4z" fill="#bfe6fa"/>
<path d="M9.4 11.4L12.8 14.8L10.6 15.4L8.8 13.6z" fill="#e8c37a"/><path d="M8.8 13.6L10.6 15.4L7.4 16.6z" fill="#333"/></svg>
<div class="a" style="left:1219px;top:1072px;width:16px;height:3px;background:#0078d4;border-radius:1.5px;"></div>
<svg class="a" style="left:1693px;top:1051px;" width="12" height="9" viewBox="0 0 12 9"><path d="M1.2 7.4L6 2.4L10.8 7.4" fill="none" stroke="#222" stroke-width="1.4"/></svg>
<svg class="a" style="left:1722px;top:1047px;" width="18" height="17" viewBox="0 0 18 17"><path d="M4.6 12.6Q1 12.4 1 9.2Q1.2 6.4 4 6Q5 2.4 8.8 2.4Q12.4 2.6 13.4 6Q14.6 6.2 15.2 7" fill="#b4b4b4" stroke="#555" stroke-width="1.3"/><path d="M4.6 12.6H9" stroke="#555" stroke-width="1.3"/>
<circle cx="12.6" cy="11.6" r="4.6" fill="#d91f33"/><path d="M10.8 9.8L14.4 13.4M14.4 9.8L10.8 13.4" stroke="#fff" stroke-width="1.2"/></svg>
<svg class="a" style="left:1754px;top:1047px;" width="18" height="18" viewBox="0 0 18 18"><path d="M2.4 7.4A6.6 6.6 0 0 1 14.4 5.2" fill="none" stroke="#222" stroke-width="1.2"/><path d="M15 1.6V5.8H10.8" fill="none" stroke="#222" stroke-width="1.2"/>
<path d="M2.6 16.2V12H6.8" fill="none" stroke="#222" stroke-width="1.2"/><path d="M3 12.4A6.6 6.6 0 0 0 7 15.6" fill="none" stroke="#222" stroke-width="1.2"/>
<circle cx="12.6" cy="12.6" r="4.4" fill="#ff9a1f"/></svg>
<svg class="a" style="left:1786px;top:1047px;" width="18" height="18" viewBox="0 0 18 18"><rect x="1.4" y="2.4" width="11.4" height="9.6" rx="1" fill="none" stroke="#222" stroke-width="1.2"/><path d="M7 12V15.4M3.6 15.8H10.6" stroke="#222" stroke-width="1.2"/>
<rect x="11.2" y="1" width="4" height="5.6" rx=".8" fill="#f3ecdc" stroke="#222" stroke-width="1.1"/><path d="M13.2 6.6V15.8H10.6" fill="none" stroke="#222" stroke-width="1.1"/></svg>
<svg class="a" style="left:1810px;top:1048px;" width="18" height="16" viewBox="0 0 18 16"><path d="M1.2 5.6H4L7.6 2.2V13.4L4 10H1.2z" fill="none" stroke="#222" stroke-width="1.1" stroke-linejoin="round"/>
<path d="M9.8 5.2Q11.2 7.8 9.8 10.4M12 3.6Q14.4 7.8 12 12M14.2 2Q17.4 7.8 14.2 13.6" fill="none" stroke="#222" stroke-width="1.1" stroke-linecap="round"/></svg>
<div class="t" style="top:1040px;font-size:11.5px;color:#1b1b1b;letter-spacing:-0.095px;left:1872.4px;">22:30</div>
<div class="t" style="top:1056px;font-size:11.5px;color:#1b1b1b;letter-spacing:0.004px;left:1843.2px;">17.10.2025</div>
</body>
</html>
